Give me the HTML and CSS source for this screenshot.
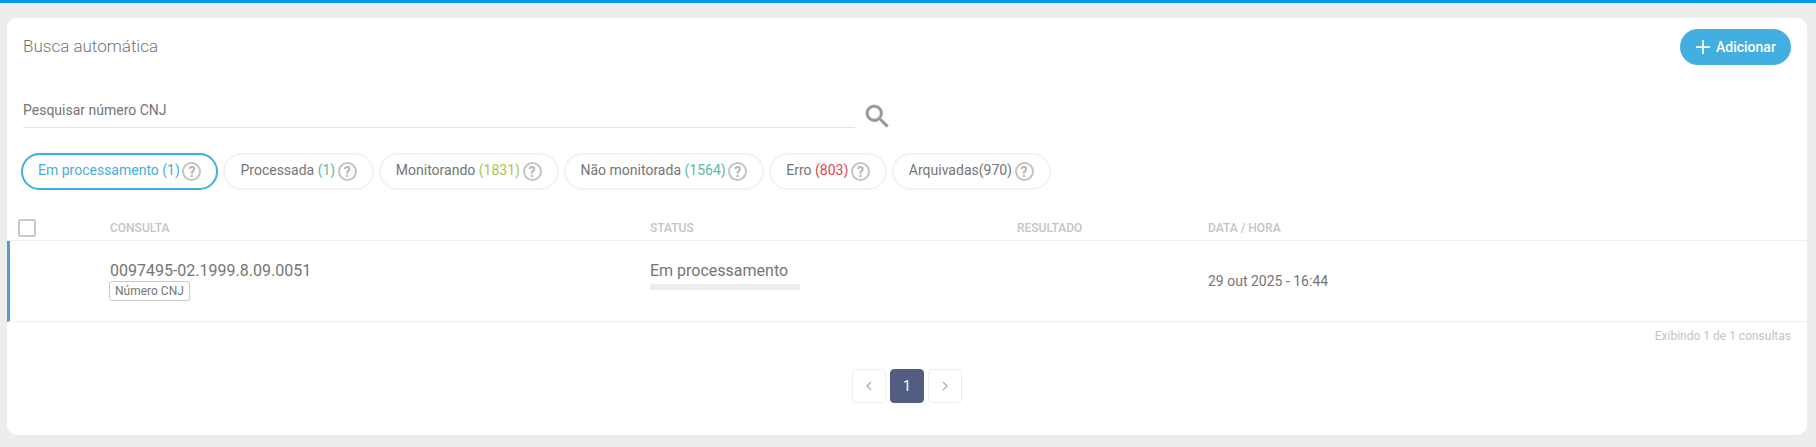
FILE: index.html
```html
<!DOCTYPE html>
<html lang="pt-BR">
  <head>
    <title>Busca automática</title>
    <meta charset="UTF-8" />
    <link rel="stylesheet" href="styles.css">
  </head>
  <body>
    <div class="top-bar"></div>
    <div class="card">
      <div class="card-head">
        <h1 class="card-title">Busca automática</h1>
        <button class="add-button" type="button">
          <svg class="add-icon" viewBox="0 0 16 16"><path d="M8 0v16M0 8h16" /></svg>
          Adicionar
        </button>
      </div>

      <div class="search-row">
        <div class="search-field">Pesquisar número CNJ</div>
        <svg class="search-icon" viewBox="0 0 24 24">
          <path d="M15.5 14h-.79l-.28-.27A6.47 6.47 0 0 0 16 9.5 6.5 6.5 0 1 0 9.5 16c1.61 0 3.09-.59 4.23-1.57l.27.28v.79l5 4.99L20.49 19l-4.99-5zm-6 0C7.01 14 5 11.99 5 9.5S7.01 5 9.5 5 14 7.01 14 9.5 11.99 14 9.5 14z" />
        </svg>
      </div>

      <div class="pills">
        <div class="pill pill-active"><span class="pill-label">Em processamento (1)</span><span class="help">?</span></div>
        <div class="pill"><span class="pill-label">Processada <span class="teal">(1)</span></span><span class="help">?</span></div>
        <div class="pill"><span class="pill-label">Monitorando <span class="green">(1831)</span></span><span class="help">?</span></div>
        <div class="pill"><span class="pill-label">Não monitorada <span class="teal">(1564)</span></span><span class="help">?</span></div>
        <div class="pill"><span class="pill-label">Erro <span class="red">(803)</span></span><span class="help">?</span></div>
        <div class="pill"><span class="pill-label">Arquivadas(970)</span><span class="help">?</span></div>
      </div>

      <div class="table-row table-header">
        <div><span class="checkbox"></span></div>
        <div>CONSULTA</div>
        <div>STATUS</div>
        <div>RESULTADO</div>
        <div>DATA / HORA</div>
      </div>
      <div class="table-row table-item">
        <div></div>
        <div>
          <div class="cnj-number">0097495-02.1999.8.09.0051</div>
          <span class="tag">Número CNJ</span>
        </div>
        <div class="status-cell">
          <div class="status-text">Em processamento</div>
          <div class="status-bar"></div>
        </div>
        <div></div>
        <div class="date-text">29 out 2025 - 16:44</div>
      </div>

      <div class="table-count">Exibindo 1 de 1 consultas</div>

      <div class="pagination">
        <div class="page-button">
          <svg class="page-arrow" viewBox="0 0 6 10"><path d="M5 1 1 5l4 4" /></svg>
        </div>
        <div class="page-button page-current">1</div>
        <div class="page-button">
          <svg class="page-arrow" viewBox="0 0 6 10"><path d="m1 1 4 4-4 4" /></svg>
        </div>
      </div>
    </div>
  </body>
</html>
```

FILE: styles.css
```css
* {
  box-sizing: border-box;
}

body {
  margin: 0;
  height: 447px;
  overflow: hidden;
  background-color: #ededed;
  font-family: Roboto, "Liberation Sans", sans-serif;
  color: #757575;
}

.top-bar {
  height: 3px;
  background-color: #039be5;
}

.card {
  margin: 15px 9px 0 7px;
  height: 417px;
  padding-top: 11px;
  background-color: #fff;
  border-radius: 10px;
}

.card-head {
  display: flex;
  justify-content: space-between;
  align-items: center;
  height: 36px;
  padding: 0 16px;
}

.card-title {
  margin: 0 0 2px;
  font-size: 17px;
  font-weight: 300;
  color: #757575;
}

.add-button {
  display: flex;
  align-items: center;
  gap: 6px;
  width: 111px;
  height: 36px;
  padding: 0 0 0 16px;
  border: 0;
  border-radius: 18px;
  background-color: #42afe0;
  color: #fff;
  font-family: inherit;
  font-size: 14px;
  font-weight: 500;
}

.add-icon {
  width: 14px;
  height: 14px;
  stroke: #fff;
  stroke-width: 2;
  fill: none;
}

.search-row {
  display: flex;
  align-items: flex-start;
  margin-top: 30px;
  padding-left: 16px;
}

.search-field {
  width: 832px;
  height: 33px;
  padding-top: 6px;
  border-bottom: 1px solid #e4e4e4;
  font-size: 14px;
  line-height: 18px;
}

.search-icon {
  width: 31px;
  height: 31px;
  margin: 6px 0 0 7px;
  fill: #999;
  stroke: #999;
  stroke-width: 0.4;
}

.pills {
  display: flex;
  gap: 5px;
  margin-top: 21px;
  padding-left: 14px;
}

.pill {
  display: flex;
  align-items: center;
  height: 37px;
  padding: 0 15px;
  border: 2px solid #f3f3f3;
  border-radius: 19px;
  font-size: 14px;
}

.pill-label {
  margin-bottom: 3px;
}

.pill-active {
  border-color: #42afe0;
  color: #42afe0;
}

.teal {
  color: #5cb8a5;
}

.green {
  color: #a5c84e;
}

.red {
  color: #e0434f;
}

.help {
  display: inline-flex;
  justify-content: center;
  align-items: center;
  width: 19px;
  height: 19px;
  margin-left: 2.6px;
  border: 2px solid #c4c4c4;
  border-radius: 50%;
  color: #b4b4b4;
  font-size: 14px;
  font-weight: 700;
  line-height: 1;
}

.table-row {
  display: grid;
  grid-template-columns: 103px 540px 367px 191px 1fr;
  border-bottom: 1px solid #eee;
}

.table-header {
  align-items: center;
  height: 25px;
  margin-top: 26px;
  font-size: 12px;
  font-weight: 500;
  color: #c4c4c4;
}

.checkbox {
  display: block;
  width: 18px;
  height: 18px;
  margin-left: 11px;
  border: 2px solid #c9c9c9;
  border-radius: 2px;
}

.table-item {
  grid-template-columns: 100px 540px 367px 191px 1fr;
  align-items: center;
  height: 81px;
  border-left: 3px solid #5b9bd5;
}

.cnj-number {
  font-size: 16px;
  line-height: 18px;
}

.tag {
  display: inline-block;
  height: 20px;
  margin: 1px 0 0 -1px;
  padding: 0 5px;
  border: 1px solid #c9c9c9;
  border-radius: 3px;
  font-size: 12px;
  line-height: 18px;
}

.status-cell {
  align-self: start;
  padding-top: 21px;
}

.status-text {
  font-size: 16px;
  line-height: 18px;
}

.status-bar {
  width: 150px;
  height: 6px;
  margin-top: 4px;
  background-color: #ededed;
}

.date-text {
  font-size: 14px;
}

.table-count {
  padding: 7px 16px 0 0;
  text-align: right;
  font-size: 12px;
  line-height: 14px;
  color: #c4c4c4;
}

.pagination {
  display: flex;
  justify-content: center;
  gap: 4px;
  margin-top: 26px;
}

.page-button {
  display: flex;
  justify-content: center;
  align-items: center;
  width: 34px;
  height: 34px;
  border: 1px solid #eee;
  border-radius: 4px;
}

.page-current {
  border-color: #535d81;
  background-color: #535d81;
  color: #fff;
  font-size: 14px;
}

.page-arrow {
  width: 6px;
  height: 10px;
  fill: none;
  stroke: #a8a8a8;
  stroke-width: 1.2;
}
```
